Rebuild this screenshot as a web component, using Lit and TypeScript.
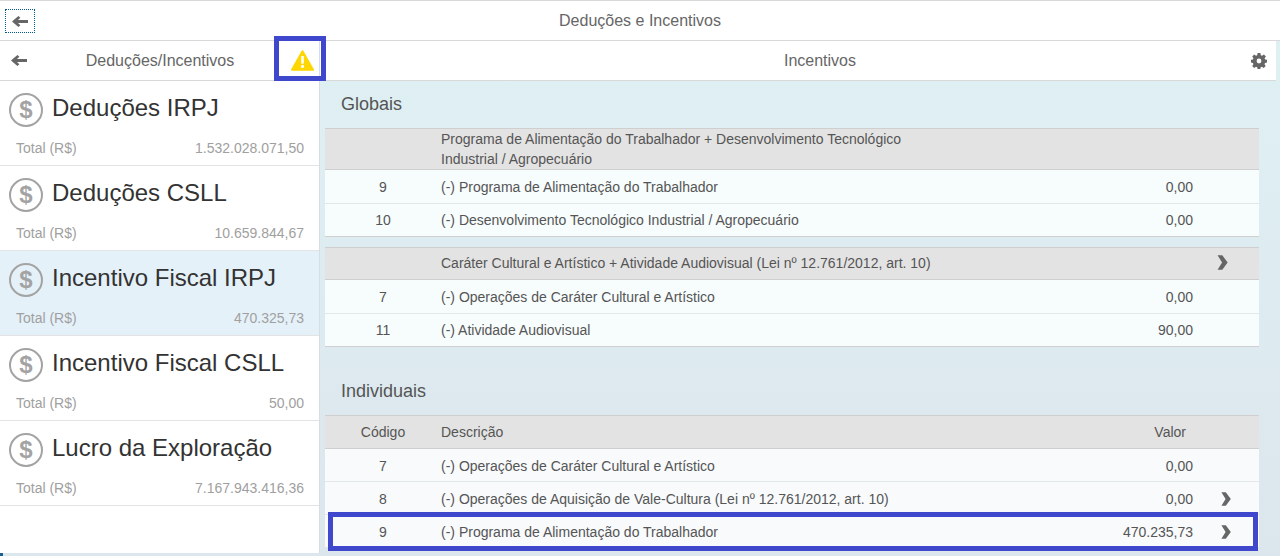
import { LitElement, html, css } from "lit";
import { customElement } from "lit/decorators.js";

const arrow = html`<svg class="arrow" viewBox="0 0 16 11"><path d="M6.4 0 L8.4 1.7 L6 4 H16 V7 H6 L8.4 9.3 L6.4 11 L0 5.5 Z" fill="#666"/></svg>`;
const chevron = html`<svg class="chev" viewBox="0 0 10 14"><path d="M0.4 0.3 H4.8 L9.8 7 L4.8 13.7 H0.4 L4.6 7 Z" fill="#666"/></svg>`;
const gear = html`<svg class="gear" viewBox="0 0 16 16"><path fill="#666" fill-rule="evenodd" d="M6.6 0h2.8l.4 2.2 1.2.5L12.9 1.4l2 2-1.3 1.9.5 1.2 1.9.3v2.8l-2 .4-.5 1.2 1.2 1.8-2 2-1.8-1.2-1.2.5-.4 2H6.6l-.4-2-1.2-.5-1.8 1.2-2-2 1.2-1.8-.5-1.2-1.9-.4V6.8l2-.3.4-1.2L1.2 3.4l2-2L5 2.7l1.2-.5zM8 5.6a2.4 2.4 0 1 0 0 4.8 2.4 2.4 0 0 0 0-4.8z"/></svg>`;
const warn = html`<svg class="warn" viewBox="0 0 23 21"><path d="M11.5 1.2 L22 19.8 H1 Z" fill="#ffd600" stroke="#ffd600" stroke-width="2" stroke-linejoin="round"/><rect x="10.2" y="6" width="2.6" height="7.6" fill="#fff"/><circle cx="11.5" cy="16.4" r="1.6" fill="#fff"/></svg>`;

const items = [
  ["Deduções IRPJ", "1.532.028.071,50", false],
  ["Deduções CSLL", "10.659.844,67", false],
  ["Incentivo Fiscal IRPJ", "470.325,73", true],
  ["Incentivo Fiscal CSLL", "50,00", false],
  ["Lucro da Exploração", "7.167.943.416,36", false],
] as const;

@customElement("app-root")
export class AppRoot extends LitElement {
  static styles = css`
    :host { display: block; position: relative; width: 1280px; height: 556px; overflow: hidden;
      font-family: "Liberation Sans", Arial, sans-serif; color: #666; font-size: 14px;
      background: linear-gradient(180deg, #dff1f4 0%, #dce6ed 100%); }
    .top { height: 39px; background: #fff; border-top: 1px solid #d9d9d9; border-bottom: 1px solid #d9d9d9;
      display: flex; align-items: center; position: relative; justify-content: center; font-size: 16px; color: #666; }
    .focus { position: absolute; left: 5px; top: 8px; width: 28px; height: 22px; border: 1px dotted #005b8f;
      display: flex; align-items: center; justify-content: center; }
    .arrow { width: 16px; height: 11px; display: block; flex: none; }
    .main { display: flex; height: 515px; }
    .left { width: 319px; background: #fff; border-right: 1px solid #d5dfe3; height: 512px; flex: none; }
    .lhead { height: 39px; border-bottom: 1px solid #d9d9d9; display: flex; align-items: center; padding: 0 0 0 11px; font-size: 16px; }
    .lhead .t { width: 266px; margin-right: -2px; text-align: center; flex: none; }
    .warn { width: 23px; height: 21px; display: block; flex: none; }
    .item { height: 84px; border-bottom: 1px solid #e3e3e3; padding: 0 15px 0 9px; display: flex; flex-direction: column; }
    .item.sel { background: #e5f1f9; }
    .item .l1 { display: flex; align-items: center; gap: 9px; height: 54px; color: #333; font-size: 24px; }
    .coin { width: 30px; height: 30px; margin-top: 4px; border: 2px solid #a3a3a3; border-radius: 50%; display: flex; align-items: center; justify-content: center;
      color: #a3a3a3; font-weight: 700; font-size: 24px; flex: none; }
    .item .l2 { display: flex; justify-content: space-between; padding-left: 7px; color: #a0a0a0; font-size: 14px; margin-top: 3px; line-height: 20px; }
    .right { flex: 1; min-width: 0; }
    .rhead { height: 39px; width: 956px; box-sizing: content-box; background: #fff; border-bottom: 1px solid #d9d9d9; display: flex; align-items: center; justify-content: center; position: relative; font-size: 16px; }
    .rhead span { margin-left: 44px; }
    .gear { width: 16px; height: 16px; position: absolute; right: 9px; top: 12px; }
    .content { padding: 0 21px 0 5px; }
    h2 { margin: 0; font-weight: 400; font-size: 18px; color: #555; padding-left: 16px; line-height: 20px; }
    h2.g { padding-top: 13px; padding-bottom: 14px; }
    h2.i { padding-top: 34px; padding-bottom: 14px; }
    .tbl + .tbl { margin-top: 10px; }
    .hd, .row { display: grid; grid-template-columns: 116px 1fr 90px 66px; align-items: center; }
    .hd { background: #e3e3e3; border-top: 1px solid #cfcfcf; border-bottom: 1px solid #cfcfcf; color: #555; }
    .hd.tall { height: 40px; }
    .hd.mid { height: 29px; padding-bottom: 2px; }
    .hd.cols { height: 32px; }
    .hd .wrap { max-width: 470px; line-height: 20px; grid-column: 2 / 5; }
    .hd .wide { grid-column: 2 / 4; }
    .hd .hch { display: flex; justify-content: center; padding-right: 8px; }
    .hd .hch .chev { width: 11px; height: 15px; }
    .row { height: 33px; background: #f7fcfd; border-bottom: 1px solid #e2e8ea; color: #555; }
    .row.last { border-bottom: 1px solid #cfcfcf; height: 32px; }
    .alt .row { background: #f8fafc; height: 30px; padding-top: 2px; }
    .c { text-align: center; }
    .v { text-align: right; }
    .val-h { text-align: right; padding-right: 7px; }
    .ch { display: flex; justify-content: center; }
    .chev { width: 10px; height: 14px; display: block; }
    .mark { position: absolute; border: 5px solid #3f48cc; box-sizing: border-box; pointer-events: none; }
    .m1 { left: 274px; top: 36px; width: 52px; height: 45px; }
    .m2 { left: 328px; top: 512px; width: 930px; height: 39px; }
    .foot { position: absolute; left: 0; bottom: 0; width: 3px; height: 3px; background: #1f5f8f; }
  `;

  private row(code: string, desc: string, val: string, opts: { chev?: boolean; last?: boolean } = {}) {
    return html`<div class="row ${opts.last ? "last" : ""}"><div class="c">${code}</div><div>${desc}</div><div class="v">${val}</div><div class="ch">${opts.chev ? chevron : ""}</div></div>`;
  }

  render() {
    return html`
      <div class="top"><div class="focus">${arrow}</div>Deduções e Incentivos</div>
      <div class="main">
        <div class="left">
          <div class="lhead">${arrow}<div class="t">Deduções/Incentivos</div>${warn}</div>
          ${items.map(([t, v, s]) => html`<div class="item ${s ? "sel" : ""}">
            <div class="l1"><div class="coin">$</div>${t}</div>
            <div class="l2"><span>Total (R$)</span><span>${v}</span></div>
          </div>`)}
        </div>
        <div class="right">
          <div class="rhead"><span>Incentivos</span>${gear}</div>
          <div class="content">
            <h2 class="g">Globais</h2>
            <div class="tbl">
              <div class="hd tall"><div></div><div class="wrap">Programa de Alimentação do Trabalhador + Desenvolvimento Tecnológico Industrial / Agropecuário</div></div>
              ${this.row("9", "(-) Programa de Alimentação do Trabalhador", "0,00")}
              ${this.row("10", "(-) Desenvolvimento Tecnológico Industrial / Agropecuário", "0,00", { last: true })}
            </div>
            <div class="tbl">
              <div class="hd mid"><div></div><div class="wide">Caráter Cultural e Artístico + Atividade Audiovisual (Lei nº 12.761/2012, art. 10)</div><div class="hch">${chevron}</div></div>
              ${this.row("7", "(-) Operações de Caráter Cultural e Artístico", "0,00")}
              ${this.row("11", "(-) Atividade Audiovisual", "90,00", { last: true })}
            </div>
            <h2 class="i">Individuais</h2>
            <div class="tbl alt">
              <div class="hd cols"><div class="c">Código</div><div>Descrição</div><div class="val-h">Valor</div><div></div></div>
              ${this.row("7", "(-) Operações de Caráter Cultural e Artístico", "0,00")}
              ${this.row("8", "(-) Operações de Aquisição de Vale-Cultura (Lei nº 12.761/2012, art. 10)", "0,00", { chev: true })}
              ${this.row("9", "(-) Programa de Alimentação do Trabalhador", "470.235,73", { chev: true })}
            </div>
          </div>
        </div>
      </div>
      <div class="mark m1"></div>
      <div class="mark m2"></div>
      <div class="foot"></div>
    `;
  }
}
